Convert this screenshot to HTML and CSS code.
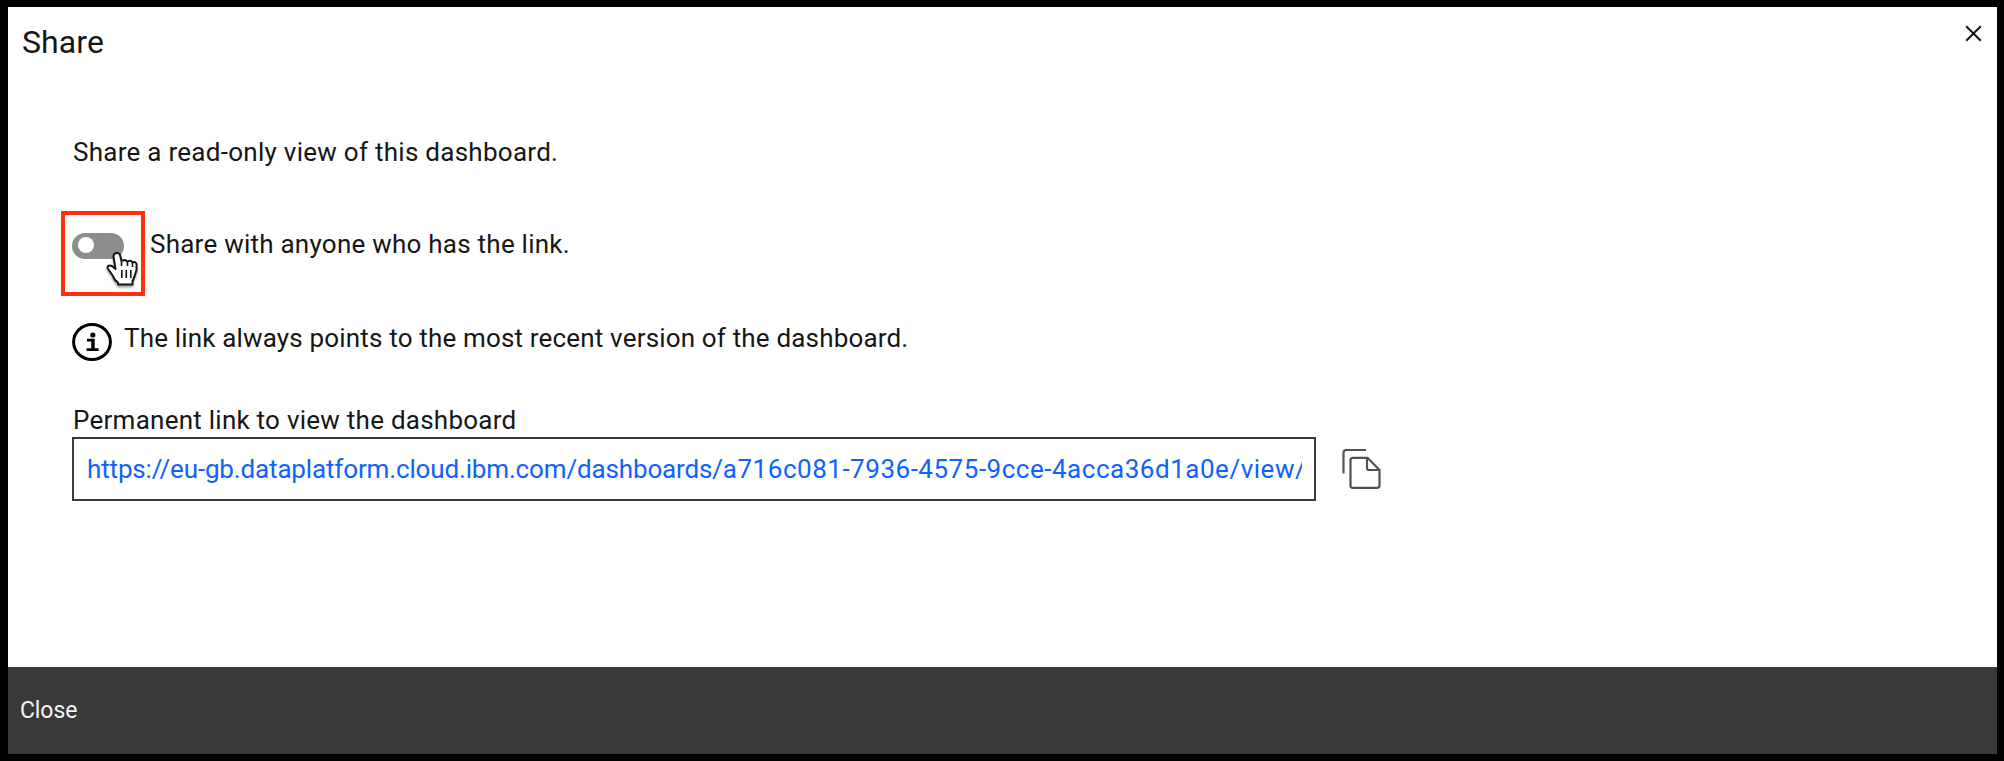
FILE: index.html
```html
<!DOCTYPE html>
<html lang="en">
<head>
<meta charset="utf-8">
<title>Share</title>
<link rel="stylesheet" href="styles.css">
</head>
<body>
<main class="dialog">
  <header class="header">
    <h1 class="title"><span>Share</span></h1>
    <button class="dismiss" aria-label="Close dialog">
      <svg width="17" height="17" viewBox="0 0 17 17"><path d="M1.2 1.2 15.8 15.8M15.8 1.2 1.2 15.8" fill="none" stroke="#161616" stroke-width="2"/></svg>
    </button>
  </header>
  <section class="content">
    <p class="intro"><span>Share a read-only view of this dashboard.</span></p>
    <div class="share-row">
      <div class="highlight">
        <div class="toggle"><div class="knob"></div></div>
        <svg class="cursor" width="36" height="40" viewBox="0 0 36 40">
          <path d="M13 3Q9.500 3 9.500 6.500L11.500 19 8 16Q3.500 14.500 3.500 18L9 26Q10 30 14 32.500V34.500H28.500V31L30.500 26.500 32.500 20V14Q31.500 11 28.500 12.500 27 9.500 23.500 11.500 21 9 17.500 11L16 5Q15.500 3 13 3Z" fill="#fff" stroke="#151515" stroke-width="2" stroke-linejoin="round"/>
          <path d="M17.500 11V16M23.500 12V16M28.500 13V17M17.800 20V28M22.300 20V28M26.800 20V28" stroke="#151515" stroke-width="1.600" fill="none"/>
        </svg>
      </div>
      <p class="share-label"><span>Share with anyone who has the link.</span></p>
    </div>
    <div class="note">
      <svg class="info" width="40" height="40" viewBox="0 0 40 40"><ellipse cx="20" cy="20" rx="18.400" ry="17.500" fill="none" stroke="#000" stroke-width="3"/><circle cx="20.800" cy="13" r="2.600"/><path d="M15 16.700H22.700V26.300H26.500V29H14.500V26.300H19.200V19.400H15Z"/></svg>
      <p class="note-text"><span>The link always points to the most recent version of the dashboard.</span></p>
    </div>
    <p class="field-label"><span>Permanent link to view the dashboard</span></p>
    <div class="link-row">
      <div class="field"><div class="url"><span class="host">https://eu-gb.dataplatform.cloud.ibm.com/dashboards/</span><span class="path">a716c081-7936-4575-9cce-4acca36d1a0e/view/</span></div></div>
      <svg width="40" height="42" viewBox="0 0 40 42"><path d="M2.500 25.500V5Q2.500 2 5.500 2H25M12 9.800H26.500L38.500 22V37.500Q38.500 39.800 36 39.800H12Q9.500 39.800 9.500 37.500V12.300Q9.500 9.800 12 9.800ZM26 10V20Q26 22 28 22H38" fill="none" stroke="#525252" stroke-width="2.200"/></svg>
    </div>
  </section>
  <footer class="footer"><span class="close">Close</span></footer>
</main>
</body>
</html>
```
FILE: styles.css
```css
* { box-sizing: border-box; }
body {
  margin: 0;
  height: 761px;
  padding: 7px 7px 7px 8px;
  background: #000;
  color: #161616;
  font: 26px/36px Roboto, "Liberation Sans", sans-serif;
  overflow: hidden;
}
h1, p { margin: 0; font-weight: 400; white-space: nowrap; }
svg { display: block; flex: none; }
.dialog { display: flex; flex-direction: column; height: 747px; background: #fff; }
.header { display: flex; justify-content: space-between; height: 108px; padding: 14px 15px 0 14px; }
.title { font-size: 32px; line-height: 42px; letter-spacing: .1px; }
.dismiss { height: 17px; padding: 0; border: 0; margin-top: 4px; background: none; }
.content { flex: 1; padding: 19px 0 0 64px; }
.intro { height: 77px; padding-left: 1px; letter-spacing: .27px; }
.share-row { display: flex; height: 85px; margin-left: -11px; }
.highlight { position: relative; width: 84px; height: 85px; padding: 18px 0 0 7px; border: 4px solid #ff2f0c; }
.toggle { display: flex; align-items: center; width: 52px; height: 26px; padding: 0 0 2px 6px; border-radius: 13px; background: #8d8d8d; }
.knob { width: 16px; height: 16px; border-radius: 50%; background: #fff; }
.cursor { position: absolute; left: 39px; top: 35px; filter: drop-shadow(0 2px 1px rgba(0, 0, 0, .35)); }
.share-label { padding: 15px 0 0 5px; letter-spacing: .24px; }
.note { display: flex; height: 88px; padding-top: 26px; }
.note-text { padding-left: 12px; letter-spacing: .17px; margin-top: -2px; }
.field-label { height: 53px; padding: 18px 0 0 1px; letter-spacing: .25px; }
.link-row { display: flex; align-items: center; gap: 25px; }
.field { width: 1244px; height: 64px; padding: 12px 12px 0 13px; border: 2px solid #393939; }
.url { overflow: hidden; white-space: nowrap; color: #0f62fe; }
.host { letter-spacing: -.15px; }
.path { letter-spacing: .52px; }
.footer { height: 87px; padding: 26px 12px; background: #393939; color: #f4f4f4; font-size: 23px; letter-spacing: -.1px; }
```
